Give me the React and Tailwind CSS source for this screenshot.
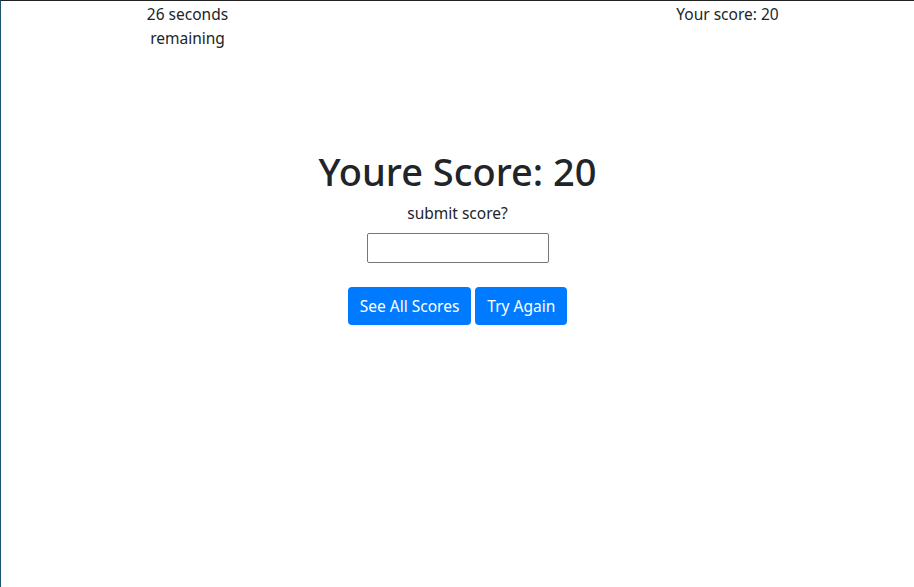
import React, { useState } from 'react';

export default function App() {
  const [name, setName] = useState('');
  return (
    <div className="min-h-[587px] w-full bg-white border-t border-t-[#222] border-l border-l-[#1b5470] text-[#212529] font-['Segoe_UI','Noto_Sans',sans-serif] text-[15.5px] leading-6">
      <div className="mx-auto w-[720px] flex">
        <div className="w-[180px] px-[15px] text-center pt-px">26 seconds remaining</div>
        <div className="w-[360px]" />
        <div className="w-[180px] px-[15px] text-center pt-px">Your score: 20</div>
      </div>
      <div className="flex flex-col items-center text-center mt-[97px]">
        <h1 className="text-[38px] leading-[48px] font-medium">Youre Score: 20</h1>
        <p className="mt-1.5">submit score?</p>
        <input
          value={name}
          onChange={(e) => setName(e.target.value)}
          className="mt-[8px] w-[182px] h-[30px] border border-[#767676] rounded-[2px] px-1 outline-none"
        />
        <div className="mt-[24px] flex gap-1">
          <button className="h-[38px] px-3 rounded bg-[#007bff] text-white">See All Scores</button>
          <button className="h-[38px] px-3 rounded bg-[#007bff] text-white">Try Again</button>
        </div>
      </div>
    </div>
  );
}
